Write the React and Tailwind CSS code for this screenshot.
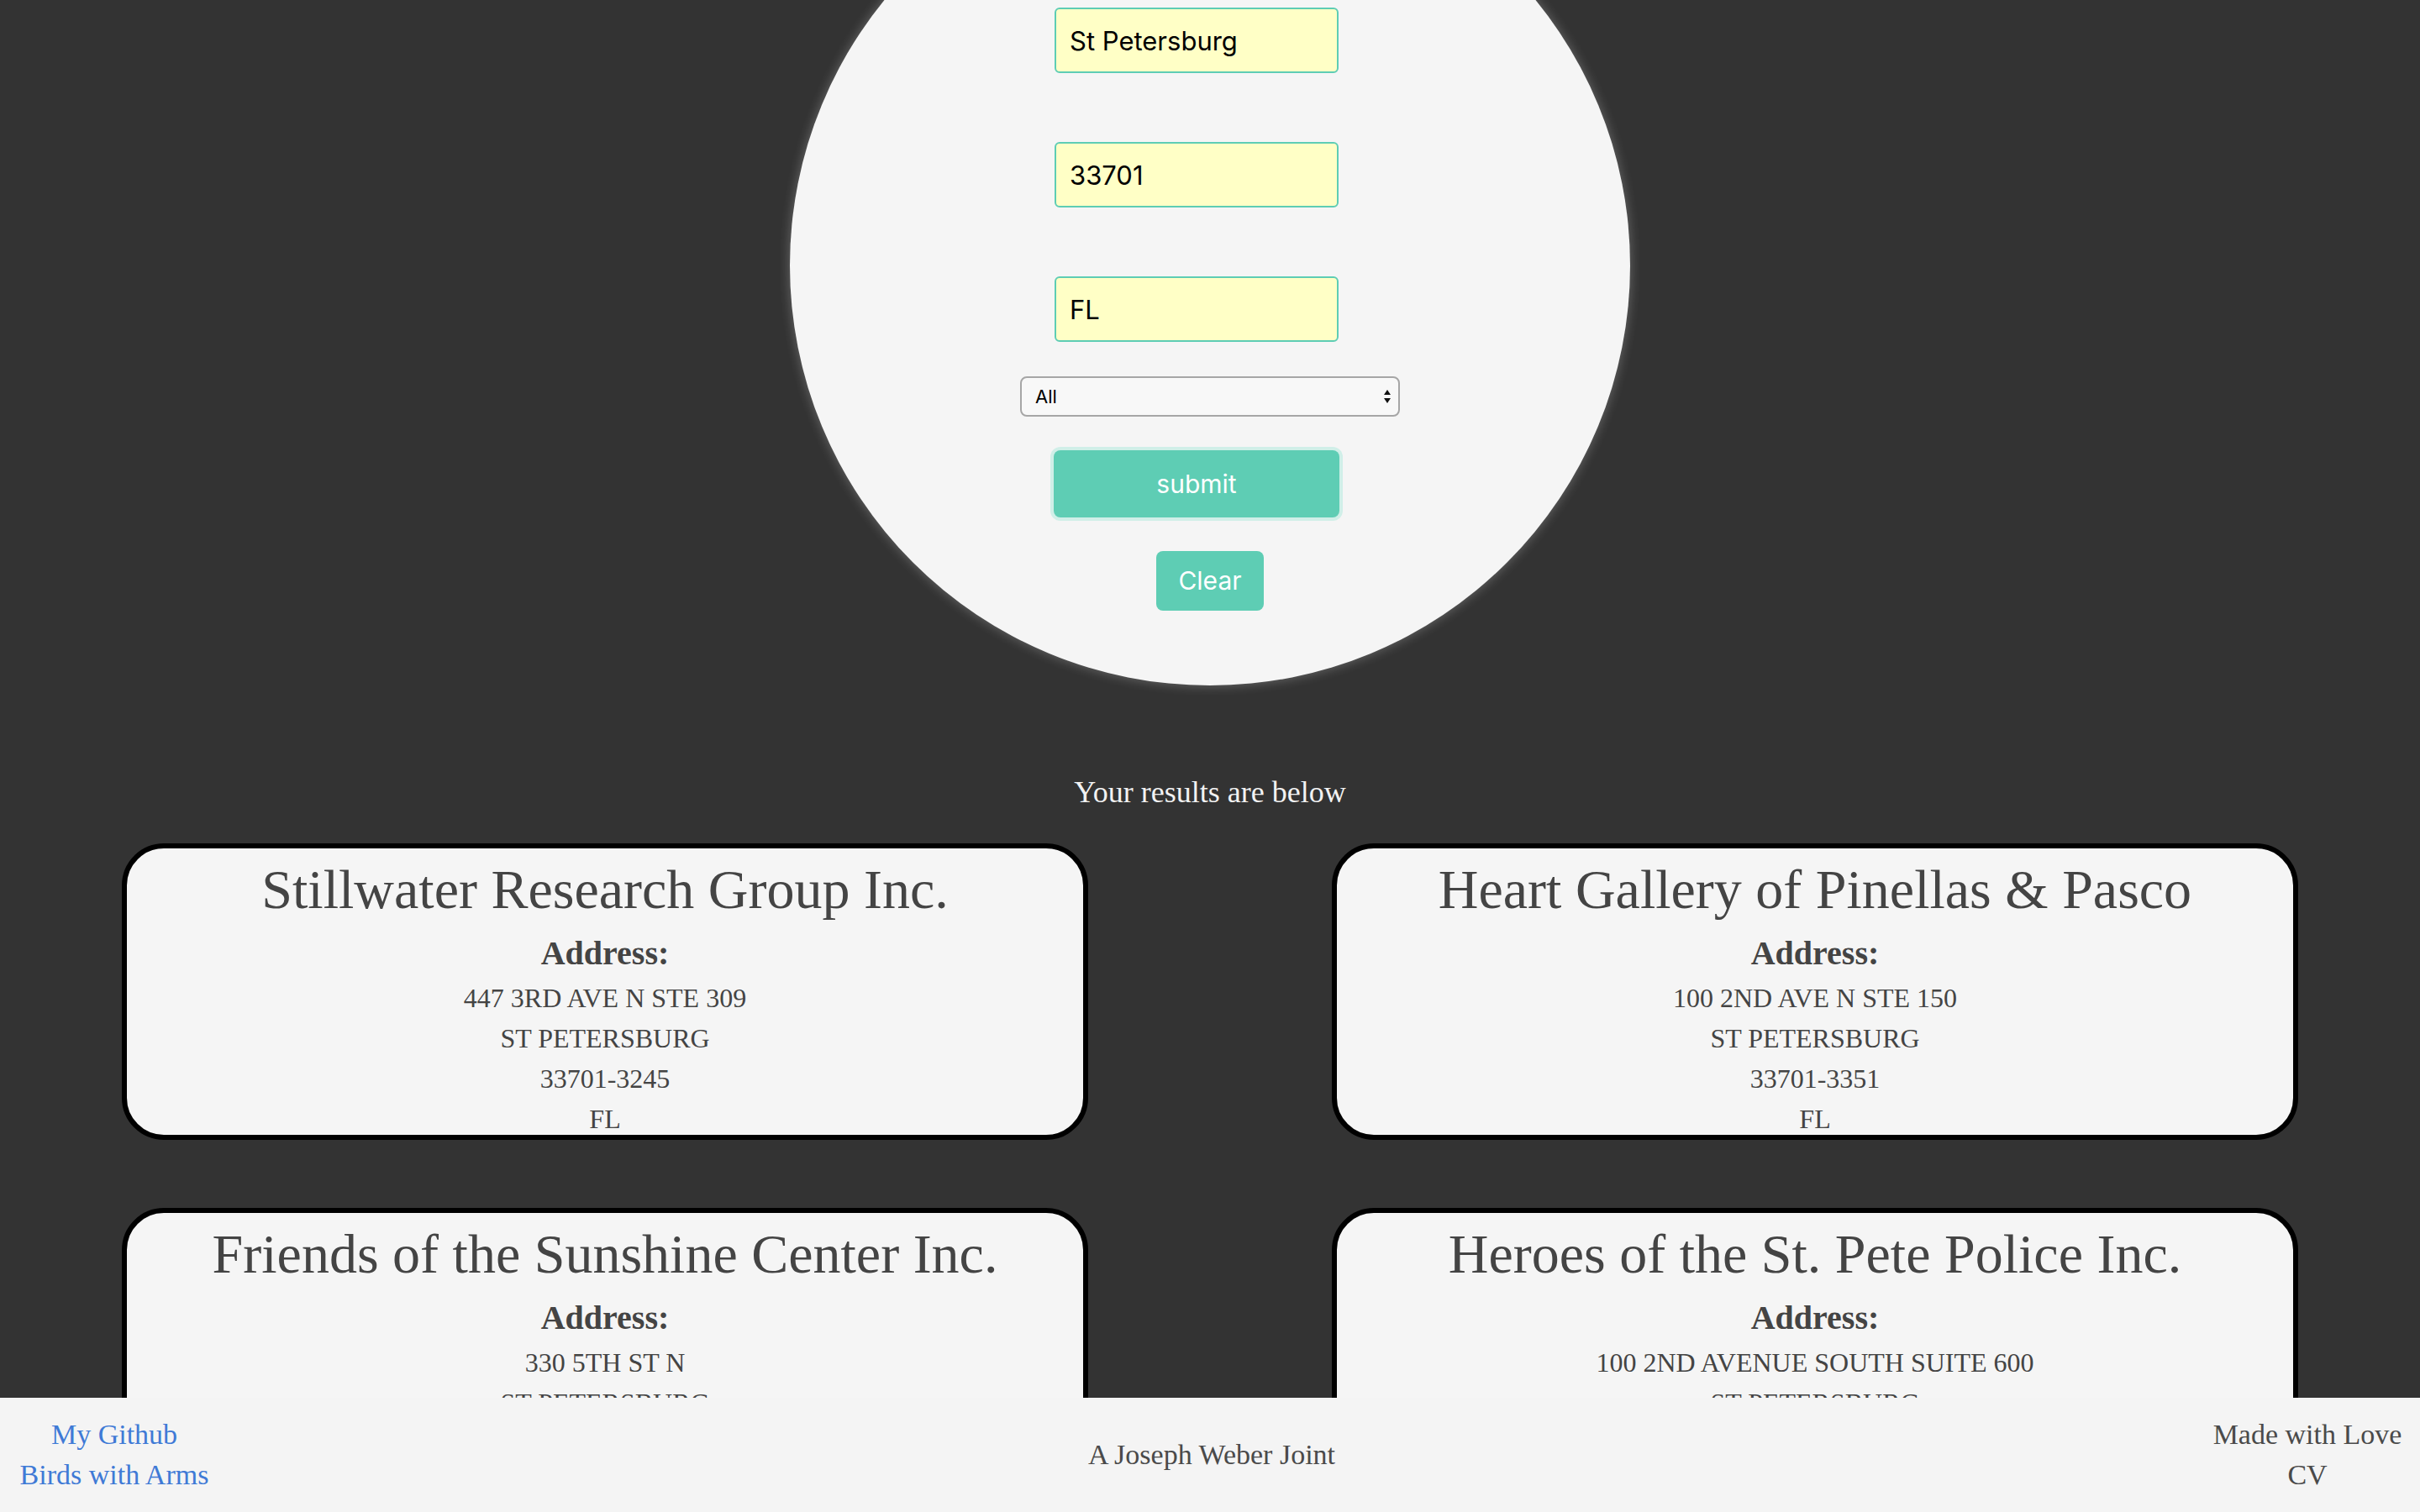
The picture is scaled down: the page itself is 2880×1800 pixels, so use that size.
import React from 'react';

const SERIF = { fontFamily: '"Liberation Serif", "DejaVu Serif", serif' };

const results = [
    { name: 'Stillwater Research Group Inc.', lines: ['447 3RD AVE N STE 309', 'ST PETERSBURG', '33701-3245', 'FL'] },
    { name: 'Heart Gallery of Pinellas & Pasco', lines: ['100 2ND AVE N STE 150', 'ST PETERSBURG', '33701-3351', 'FL'] },
    { name: 'Friends of the Sunshine Center Inc.', lines: ['330 5TH ST N', 'ST PETERSBURG', '33701-3816', 'FL'] },
    { name: 'Heroes of the St. Pete Police Inc.', lines: ['100 2ND AVENUE SOUTH SUITE 600', 'ST PETERSBURG', '33701-4336', 'FL'] },
];

/* Search field: pale yellow box with teal border. */
function Field({ value, first }) {
    return (
        <input
            readOnly
            value={value}
            className={"w-[338px] h-[78px] mr-[32px] border-2 border-[#5ecdb4] rounded-[6px] bg-[#ffffc6] pl-[16px] text-[31px] text-black outline-none font-['Inter'] " + (first ? '' : 'mt-[82px]')}
        />
    );
}

function ResultCard({ item }) {
    return (
        <div className="w-[1150px] h-[353px] overflow-hidden border-[6px] border-black rounded-[50px] bg-[#f5f5f5] text-center text-[#444444]" style={SERIF}>
            <h1 className="mt-[18px] text-[66px] leading-[62px]">{item.name}</h1>
            <h3 className="mt-[25px] text-[40px] leading-[40px] font-bold">Address:</h3>
            <div className="mt-[9px] text-[32px] leading-[48px]">
                {item.lines.map((l, i) => <p key={i}>{l}</p>)}
            </div>
        </div>
    );
}

export default function App() {
    return (
        <div className="h-screen flex flex-col overflow-hidden bg-[#333333]">
            <main className="flex-1 min-h-0 overflow-hidden">
                {/* search form, inside the big circle */}
                <div className="mx-auto mt-[-184px] w-[1000px] h-[1000px] rounded-full bg-[#f5f5f5] shadow-[0_0_14px_rgba(255,255,255,0.28)] flex flex-col items-center pt-[193px] font-['Inter']">
                    <Field value="St Petersburg" first />
                    <Field value="33701" />
                    <Field value="FL" />
                    <div className="mt-[41px] w-[452px] h-[48px] border-2 border-[#a6a6a6] rounded-[8px] bg-[#f8f8f8] flex items-center justify-between pl-[16px] pr-[8px]">
                        <span className="text-[22px] text-black">All</span>
                        <svg width="10" height="20" viewBox="0 0 10 20">
                            <path d="M5 2 L9 8 L1 8 Z" fill="#111" />
                            <path d="M5 18 L9 12 L1 12 Z" fill="#111" />
                        </svg>
                    </div>
                    <button className="mt-[40px] mr-[32px] w-[340px] h-[80px] rounded-[8px] bg-[#5ecdb4] ring-4 ring-[#d0efe8] text-white text-[30px]">
                        submit
                    </button>
                    <button className="mt-[40px] w-[128px] h-[71px] rounded-[8px] bg-[#5ecdb4] text-white text-[30px]">
                        Clear
                    </button>
                </div>

                <p className="mt-[103px] text-center text-[36px] leading-[48px] text-[#f2f2f2]" style={SERIF}>
                    Your results are below
                </p>

                <div className="mt-[37px] flex flex-wrap justify-around gap-y-[81px]">
                    {results.map((r) => <ResultCard key={r.name} item={r} />)}
                </div>
            </main>

            <footer className="h-[136px] flex-none bg-[#f4f4f4] flex items-center text-[34px] leading-[48px]" style={SERIF}>
                <div className="w-[272px] text-center text-[#3f7ad6]">
                    <p>My Github</p>
                    <p>Birds with Arms</p>
                </div>
                <div className="flex-1 text-center text-[#4a4a4a]">A Joseph Weber Joint</div>
                <div className="w-[268px] text-center text-[#4a4a4a]">
                    <p>Made with Love</p>
                    <p>CV</p>
                </div>
            </footer>
        </div>
    );
}
